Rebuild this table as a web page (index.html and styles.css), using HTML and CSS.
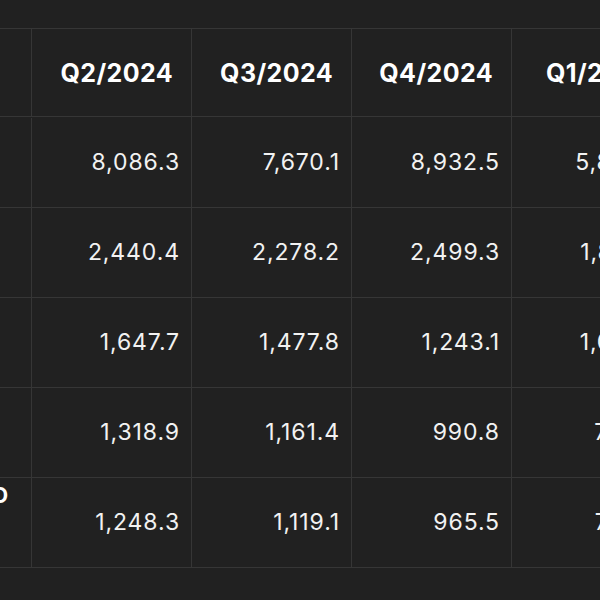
FILE: index.html
```html
<!DOCTYPE html>
<html>
<head>
<meta charset="utf-8">
<link rel="stylesheet" href="styles.css">
</head>
<body>
<div class="viewport">
  <div class="grid">
    <div class="cell head label"></div>
    <div class="cell head">Q2/2024</div>
    <div class="cell head">Q3/2024</div>
    <div class="cell head">Q4/2024</div>
    <div class="cell head">Q1/2025</div>
    <div class="cell head">Q2/2025</div>

    <div class="cell label">Net revenue</div>
    <div class="cell num">8,086.3</div>
    <div class="cell num">7,670.1</div>
    <div class="cell num">8,932.5</div>
    <div class="cell num">5,857.0</div>
    <div class="cell num">6,120.4</div>

    <div class="cell label">Gross profit</div>
    <div class="cell num">2,440.4</div>
    <div class="cell num">2,278.2</div>
    <div class="cell num">2,499.3</div>
    <div class="cell num">1,812.6</div>
    <div class="cell num">1,905.2</div>

    <div class="cell label">EBIT</div>
    <div class="cell num">1,647.7</div>
    <div class="cell num">1,477.8</div>
    <div class="cell num">1,243.1</div>
    <div class="cell num">1,021.9</div>
    <div class="cell num">1,110.7</div>

    <div class="cell label">Pre-tax profit</div>
    <div class="cell num">1,318.9</div>
    <div class="cell num">1,161.4</div>
    <div class="cell num">990.8</div>
    <div class="cell num">760.5</div>
    <div class="cell num">812.3</div>

    <div class="cell label"><span class="lines">Net profit, USD<br>million<br>(parent)</span></div>
    <div class="cell num">1,248.3</div>
    <div class="cell num">1,119.1</div>
    <div class="cell num">965.5</div>
    <div class="cell num">735.2</div>
    <div class="cell num">790.8</div>
  </div>
</div>
</body>
</html>
```

FILE: styles.css
```css
html, body {
  margin: 0;
  padding: 0;
  background: #212121;
}

body {
  width: 600px;
  height: 600px;
  overflow: hidden;
  font-family: Inter, "Noto Sans", sans-serif;
  color: #ffffff;
}

.viewport {
  width: 600px;
  height: 600px;
  overflow: hidden;
  padding-top: 28px;
  box-sizing: border-box;
}

.grid {
  display: grid;
  grid-template-columns: 200px repeat(5, 160px);
  grid-auto-rows: 90px;
  width: 1000px;
  margin-left: -168px;
}

.cell {
  box-sizing: border-box;
  border-right: 1px solid #363636;
  border-bottom: 1px solid #363636;
  display: flex;
  align-items: center;
  justify-content: flex-end;
  padding-right: 11px;
}

.head {
  height: 89px;
  border-top: 1px solid #363636;
  font-size: 25px;
  font-weight: 700;
  padding-right: 18px;
  letter-spacing: 0.4px;
}

.grid > .cell:nth-child(-n+6) {
  align-self: start;
}

.num {
  font-size: 23px;
  font-weight: 400;
  color: #f2f2f2;
  letter-spacing: 0.9px;
  margin-top: -1px;
}

.label {
  justify-content: flex-start;
  padding-left: 16px;
  font-size: 22px;
  font-weight: 700;
  line-height: 27px;
  white-space: nowrap;
}

.lines {
  display: block;
}
```
